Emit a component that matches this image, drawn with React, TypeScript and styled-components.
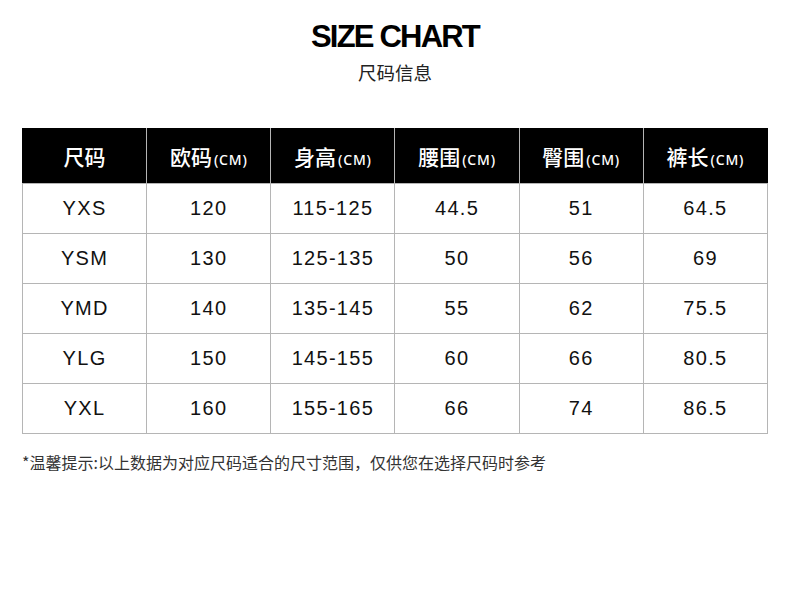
import React from 'react';
import styled, { createGlobalStyle } from 'styled-components';

const GlobalStyle = createGlobalStyle`
  html, body { margin: 0; padding: 0; background: #ffffff; }
  body { font-family: "Liberation Sans", "Noto Sans CJK SC", sans-serif; color: #111111; }
`;

// --- Styled Components ---
const Page = styled.div`
  width: 790px;
  height: 604px;
  padding: 0 22px;
  box-sizing: border-box;
`;
const Header = styled.header`
  display: flex;
  flex-direction: column;
  align-items: center;
  padding-top: 19px;
`;
const Title = styled.h1`
  margin: 0;
  font-family: "Liberation Sans", Arial, sans-serif;
  font-size: 31px;
  line-height: 36px;
  font-weight: bold;
  letter-spacing: -1.8px;
  color: #000000;
`;
const Subtitle = styled.div`
  margin-top: 6px;
  font-family: "Noto Sans CJK SC", sans-serif;
  font-size: 18.5px;
  line-height: 22px;
  color: #222222;
`;
const Table = styled.table`
  margin-top: 45px;
  width: 746px;
  border-collapse: collapse;
  table-layout: fixed;
`;
const HeadCell = styled.th`
  height: 54px;
  padding: 0;
  background: #000000;
  color: #ffffff;
  border: 1px solid #b5b5b5;
  border-top-color: #000000;
  font-family: "Noto Sans CJK SC", sans-serif;
  font-size: 21px;
  font-weight: 500;
  text-align: center;
  &:first-child { border-left-color: #000000; }
  &:last-child { border-right-color: #000000; }
`;
const Unit = styled.span`
  margin-left: 2px;
  font-family: "Noto Sans", "Liberation Sans", sans-serif;
  font-size: 14px;
  font-weight: 500;
  letter-spacing: 0.8px;
`;
const Cell = styled.td`
  height: 49px;
  padding: 0;
  border: 1px solid #b5b5b5;
  font-family: "Liberation Sans", Arial, sans-serif;
  font-size: 20px;
  letter-spacing: 1.3px;
  color: #111111;
  text-align: center;
`;
const Note = styled.p`
  margin: 16px 0 0;
  font-family: "Noto Sans CJK SC", sans-serif;
  font-size: 16px;
  color: #333333;
`;

const columns = [
  { name: '尺码' },
  { name: '欧码', unit: '(CM)' },
  { name: '身高', unit: '(CM)' },
  { name: '腰围', unit: '(CM)' },
  { name: '臀围', unit: '(CM)' },
  { name: '裤长', unit: '(CM)' },
];

const rows = [
  ['YXS', '120', '115-125', '44.5', '51', '64.5'],
  ['YSM', '130', '125-135', '50', '56', '69'],
  ['YMD', '140', '135-145', '55', '62', '75.5'],
  ['YLG', '150', '145-155', '60', '66', '80.5'],
  ['YXL', '160', '155-165', '66', '74', '86.5'],
];

export default function App() {
  return (
    <>
      <GlobalStyle />
      <Page>
        <Header>
          <Title>SIZE CHART</Title>
          <Subtitle>尺码信息</Subtitle>
        </Header>

        <Table>
          <thead>
            <tr>
              {columns.map((c) => (
                <HeadCell key={c.name}>
                  {c.name}
                  {c.unit && <Unit>{c.unit}</Unit>}
                </HeadCell>
              ))}
            </tr>
          </thead>
          <tbody>
            {rows.map((r) => (
              <tr key={r[0]}>
                {r.map((v, i) => (
                  <Cell key={i}>{v}</Cell>
                ))}
              </tr>
            ))}
          </tbody>
        </Table>

        <Note>*温馨提示:以上数据为对应尺码适合的尺寸范围，仅供您在选择尺码时参考</Note>
      </Page>
    </>
  );
}
